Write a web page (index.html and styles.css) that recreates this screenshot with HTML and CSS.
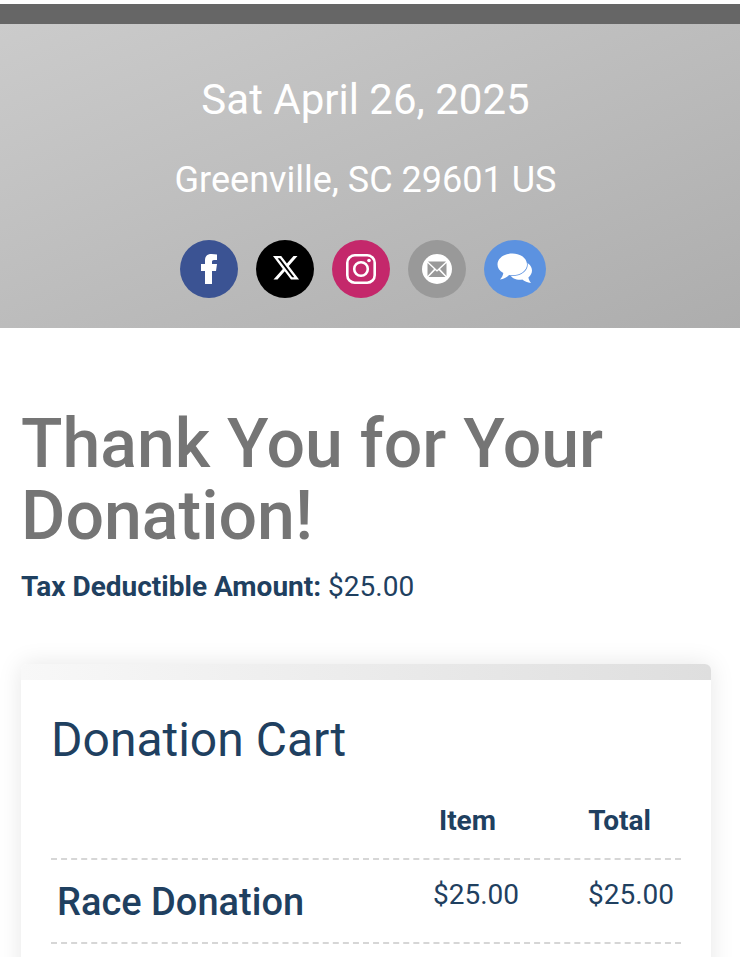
FILE: index.html
```html
<!DOCTYPE html>
<html lang="en">
  <head>
    <title>Thank You for Your Donation</title>
    <link rel="stylesheet" href="styles.css">
  </head>
  <body>
    <div class="topbar"></div>
    <header class="hero">
      <p class="date">Sat April 26, 2025</p>
      <p class="place">Greenville, SC 29601 US</p>
      <div class="social">
        <a class="icon fb">
          <svg width="58" height="58" viewBox="0 0 58 58"><path fill="#fff" d="M25 44V31h-4v-7h4v-3.500C25 16 27.500 14 31.500 14c2 0 4 .2 5.500.5V20h-3c-1.500 0-2 .8-2 2v2h5l-1 7h-4v13z"/></svg>
        </a>
        <a class="icon tw">
          <svg width="58" height="58" viewBox="0 0 24 24"><g transform="translate(6.400 5.500) scale(.5)"><path fill="#fff" d="M18.244 2.250h3.308l-7.227 8.260 8.502 11.240H16.170l-5.214-6.817L4.990 21.750H1.680l7.730-8.835L1.254 2.250H8.080l4.713 6.231zm-1.161 17.520h1.833L7.084 4.126H5.117z"/></g></svg>
        </a>
        <a class="icon ig">
          <svg width="58" height="58" viewBox="0 0 58 58"><rect x="15.300" y="15.300" width="27.400" height="27.400" rx="7.500" fill="none" stroke="#fff" stroke-width="2.600"/><circle cx="29" cy="29" r="6.800" fill="none" stroke="#fff" stroke-width="2.600"/><circle cx="37" cy="20.500" r="1.800" fill="#fff"/></svg>
        </a>
        <a class="icon mail">
          <svg width="58" height="58" viewBox="0 0 58 58"><circle cx="29" cy="29" r="15" fill="#fff"/><path fill="#999" d="M20 21.500h18l-9 8.500zM19.500 23l6.500 6-6.500 7zM38.500 23L32 29l6.500 7zM20.500 37l6.700-6.800 1.800 1.600 1.800-1.600 6.700 6.800z"/></svg>
        </a>
        <a class="icon chat">
          <svg width="62" height="58" viewBox="0 0 62 58"><path fill="#fff" d="M36 21c6.600 0 12 4 12 9.500 0 2.800-1.400 5.200-3.600 7 .4 2.200 1.300 4 2.600 5.500-3.500-.4-6.600-1.700-8.700-3.500-.8.100-1.500.2-2.300.2-4.500 0-8.500-2-10-5z"/><path fill="#fff" stroke="#5c92e0" stroke-width="1.500" paint-order="stroke" d="M28.500 13.500c8 0 14.500 4.800 14.500 11 0 6-6.500 10.800-14.500 10.800-1.200 0-2.300-.1-3.400-.3-2.500 2.400-5.500 4-9.100 4.500 1.800-1.900 3-3.900 3.300-6.500-3.900-1.900-5.800-5-5.800-8.500 0-6.200 6.500-11 15-11z"/></svg>
        </a>
      </div>
    </header>
    <main class="content">
      <h1>Thank You for Your Donation!</h1>
      <p class="amount"><strong>Tax Deductible Amount:</strong> $25.00</p>
      <section class="card">
        <div class="card-top"></div>
        <div class="card-body">
          <h2>Donation Cart</h2>
          <div class="cart-row cart-head">
            <span class="name"></span>
            <span class="item">Item</span>
            <span class="total">Total</span>
          </div>
          <div class="cart-row">
            <span class="name">Race Donation</span>
            <span class="item">$25.00</span>
            <span class="total">$25.00</span>
          </div>
        </div>
      </section>
    </main>
  </body>
</html>
```
FILE: styles.css
```css
* {
  box-sizing: border-box;
  margin: 0;
  padding: 0;
}
html,
body {
  height: 957px;
  overflow: hidden;
}
body {
  font-family: Roboto, Arial, sans-serif;
  background-color: #fff;
  color: #1f4060;
  padding-top: 4px;
}
.topbar {
  height: 20px;
  background-color: #666;
}
.hero {
  height: 304px;
  padding: 50px 9px 0 0;
  background: linear-gradient(to bottom right, #cbcbcb, #adadad);
  color: #fff;
  text-align: center;
}
.date {
  font-size: 42px;
  line-height: 52px;
}
.place {
  font-size: 36px;
  line-height: 44px;
  margin-top: 32px;
}
.social {
  display: flex;
  justify-content: center;
  gap: 18px;
  margin-top: 38px;
  padding-right: 5px;
}
.icon {
  display: block;
  height: 58px;
  width: 58px;
  border-radius: 50%;
}
.icon svg {
  display: block;
}
.fb {
  background-color: #3b5393;
}
.tw {
  background-color: #000;
}
.ig {
  background-color: #c4286b;
}
.mail {
  background-color: #999;
}
.chat {
  width: 62px;
  background-color: #5c92e0;
}
.content {
  padding: 80px 29px 0 21px;
}
h1 {
  color: #757575;
  font-size: 68px;
  font-weight: 500;
  line-height: 72px;
}
.amount {
  font-size: 28px;
  line-height: 36px;
  margin-top: 17px;
}
.amount strong {
  font-weight: 700;
}
.card {
  margin-top: 59px;
  border-radius: 6px 6px 0 0;
  background-color: #fff;
  box-shadow: 0 0 24px rgba(0, 0, 0, 0.1);
}
.card-top {
  height: 16px;
  border-radius: 6px 6px 0 0;
  background: linear-gradient(to right, #f8f8f8, #dedede);
}
.card-body {
  padding: 32px 30px 40px;
}
h2 {
  font-size: 48px;
  font-weight: 400;
  line-height: 56px;
}
.cart-row {
  display: grid;
  grid-template-columns: 325px 150px 155px;
  height: 84px;
  font-size: 28px;
  text-align: right;
  border-bottom: 2px dashed #d6d6d6;
}
.cart-row .item,
.cart-row .total {
  padding: 18px 7px 0 0;
}
.cart-row .name {
  padding: 20px 0 0 6px;
  font-size: 38px;
  font-weight: 500;
  text-align: left;
}
.cart-head {
  height: 74px;
  margin-top: 18px;
  font-weight: 700;
}
.cart-head .item,
.cart-head .total {
  padding: 18px 30px 0 0;
}
```
